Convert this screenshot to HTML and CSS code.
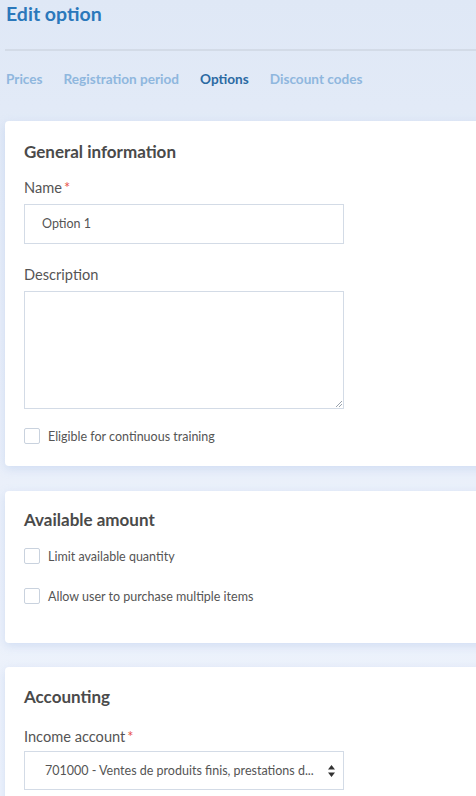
FILE: index.html
```html
<!DOCTYPE html>
<html>
<head>
<meta charset="utf-8">
<link rel="stylesheet" href="styles.css">
</head>
<body>
<div class="page">
  <h1 class="title">Edit option</h1>
  <div class="divider"></div>
  <nav class="tabs">
    <span class="tab">Prices</span>
    <span class="tab">Registration period</span>
    <span class="tab active">Options</span>
    <span class="tab">Discount codes</span>
  </nav>

  <section class="card card-general">
    <h2 class="card-title">General information</h2>
    <label class="label">Name<span class="req">*</span></label>
    <div class="input">Option 1</div>
    <label class="label label-desc">Description</label>
    <div class="textarea">
      <svg class="grip" width="6" height="6" viewBox="0 0 6 6"><path d="M6 0 L0 6 M6 3 L3 6" stroke="#9aa3ad" stroke-width="1"/></svg>
    </div>
    <div class="check check-first"><span class="box"></span><span>Eligible for continuous training</span></div>
  </section>

  <section class="card card-amount">
    <h2 class="card-title">Available amount</h2>
    <div class="check check-a1"><span class="box"></span><span>Limit available quantity</span></div>
    <div class="check check-a2"><span class="box"></span><span>Allow user to purchase multiple items</span></div>
  </section>

  <section class="card card-acc">
    <h2 class="card-title">Accounting</h2>
    <label class="label">Income account<span class="req">*</span></label>
    <div class="select">
      <span class="select-text">701000 - Ventes de produits finis, prestations d...</span>
      <svg class="arrows" width="7" height="12" viewBox="0 0 7 12"><path d="M3.5 0 L7 4.5 L0 4.5 Z M3.5 12 L7 7.5 L0 7.5 Z" fill="#333"/></svg>
    </div>
  </section>
</div>
</body>
</html>
```

FILE: styles.css
```css
html, body {
  margin: 0;
  padding: 0;
}
body {
  width: 476px;
  height: 796px;
  overflow: hidden;
  font-family: Lato, "Noto Sans", sans-serif;
  background: linear-gradient(180deg, #dfe8f6 0%, #e8eef9 40%, #eef3fc 100%);
}
.page {
  padding-left: 5px;
}
.title {
  margin: 0;
  padding: 2px 0 0 1px;
  font-size: 19.5px;
  line-height: 23px;
  font-weight: 700;
  color: #2b78bb;
}
.divider {
  margin-top: 24px;
  height: 2px;
  background: #d3dbe7;
}
.tabs {
  display: flex;
  gap: 21px;
  padding: 19px 0 0 1px;
  height: 18px;
  line-height: 18px;
}
.tab {
  font-size: 13.6px;
  font-weight: 700;
  color: #8fb7de;
}
.tab.active {
  color: #2b6aa3;
}
.card {
  background: #fff;
  width: 500px;
  border-radius: 4px;
  box-shadow: 0 3px 10px rgba(160, 185, 230, 0.35);
  padding: 21px 19px 0 19px;
  box-sizing: border-box;
}
.card-general {
  margin-top: 33px;
  height: 345px;
}
.card-amount {
  margin-top: 25px;
  height: 152px;
  padding-top: 19px;
}
.card-acc {
  margin-top: 24px;
  height: 200px;
  padding-top: 20px;
}
.card-title {
  margin: 0;
  font-size: 17px;
  line-height: 20px;
  font-weight: 700;
  color: #4a4a4a;
}
.label {
  display: block;
  margin-top: 17px;
  font-size: 14.6px;
  line-height: 18px;
  color: #555;
}
.label-desc {
  margin-top: 22px;
}
.card-acc .label {
  margin-top: 21px;
}
.req {
  color: #e8554e;
  margin-left: 2px;
}
.input, .select, .textarea {
  width: 320px;
  box-sizing: border-box;
  border: 1px solid #d3dbe6;
  background: #fff;
}
.input {
  margin-top: 7px;
  height: 40px;
  padding-left: 17px;
  font-size: 12.5px;
  line-height: 38px;
  color: #555;
}
.textarea {
  margin-top: 7px;
  height: 118px;
  position: relative;
}
.grip {
  position: absolute;
  right: 1px;
  bottom: 1px;
}
.check {
  display: flex;
  align-items: center;
  gap: 8px;
  font-size: 12.5px;
  color: #555;
  height: 16px;
}
.box {
  width: 16px;
  height: 16px;
  box-sizing: border-box;
  border: 1px solid #c9d2de;
  border-radius: 2px;
  background: #fff;
}
.check-first {
  margin-top: 19px;
}
.check-a1 {
  margin-top: 18px;
}
.check-a2 {
  margin-top: 24px;
}
.select {
  margin-top: 5px;
  height: 39px;
  display: flex;
  align-items: center;
  justify-content: space-between;
  padding: 0 8px 0 20px;
}
.select-text {
  font-size: 12.5px;
  color: #555;
  white-space: nowrap;
}
```
